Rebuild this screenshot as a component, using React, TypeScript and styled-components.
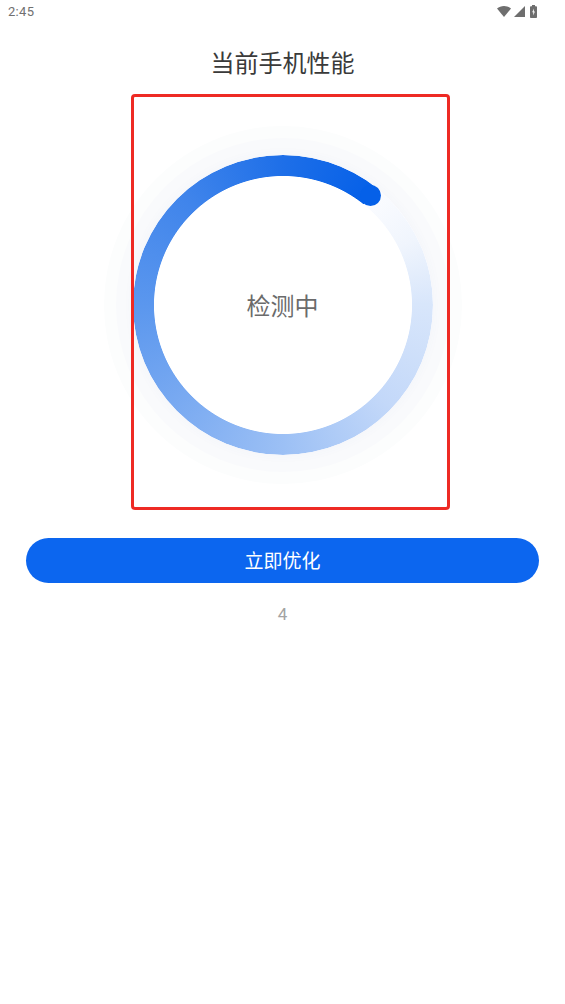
import React from 'react';
import styled, { createGlobalStyle } from 'styled-components';

const CJK = '"Noto Sans CJK SC", "Noto Sans", sans-serif';

const GlobalStyle = createGlobalStyle`
  html, body {
    margin: 0;
    padding: 0;
    background: #fff;
  }
`;

const Screen = styled.div`
  position: relative;
  width: 565px;
  height: 1004px;
  overflow: hidden;
  background: #fff;
  font-family: ${CJK};
`;

const StatusBar = styled.div`
  display: flex;
  align-items: center;
  justify-content: space-between;
  height: 22px;
  padding: 0 28px 2px 8px;
`;

const Clock = styled.span`
  font-family: Roboto, sans-serif;
  font-size: 13px;
  letter-spacing: 0.3px;
  color: #707070;
`;

const StatusIcons = styled.div`
  display: flex;
  align-items: center;
  color: #6e6e6e;
`;

const StatusIcon = styled.svg<{ $gap?: number }>`
  display: block;
  margin-left: ${p => p.$gap ?? 0}px;
`;

const Title = styled.h1`
  margin: 20px 0 0;
  height: 36px;
  line-height: 36px;
  font-size: 24px;
  font-weight: 400;
  text-align: center;
  color: #3a3a3a;
`;

const Stage = styled.div`
  display: flex;
  align-items: center;
  justify-content: center;
  height: 416px;
  margin-top: 17px;
`;

const Halo = styled.div<{ $size: number; $tint: string }>`
  display: flex;
  align-items: center;
  justify-content: center;
  flex: none;
  width: ${p => p.$size}px;
  height: ${p => p.$size}px;
  border-radius: 50%;
  background: ${p => p.$tint};
`;

const Dial = styled.div`
  position: relative;
  display: flex;
  align-items: center;
  justify-content: center;
  width: 300px;
  height: 300px;
  flex: none;
  border-radius: 50%;
  background: #fff;
  box-shadow: 0 0 12px rgba(70, 110, 190, 0.04);
`;

const Ring = styled.div`
  position: absolute;
  inset: 0;
  border-radius: 50%;
  background: conic-gradient(
    from 38.6deg,
    #fbfcff 0deg,
    #f0f5fd 25deg,
    #d8e6fb 51deg,
    #c3d8f9 95deg,
    #9cc0f5 141deg,
    #78a9f1 190deg,
    #5b97ee 231deg,
    #3f84eb 280deg,
    #1e6fe8 321deg,
    #0560e8 360deg
  );
  -webkit-mask: radial-gradient(circle, transparent 128.6px, #000 129.4px);
  mask: radial-gradient(circle, transparent 128.6px, #000 129.4px);
`;

const RingHead = styled.span`
  position: absolute;
  top: 30px;
  left: 227px;
  width: 21px;
  height: 21px;
  border-radius: 50%;
  background: #0560e8;
`;

const DialLabel = styled.span`
  position: relative;
  font-size: 24px;
  line-height: 36px;
  color: #6b6b6b;
`;

const Frame = styled.div`
  position: absolute;
  top: 94px;
  left: 131px;
  width: 319px;
  height: 416px;
  box-sizing: border-box;
  border: 3px solid #ee2a24;
  border-radius: 4px;
  pointer-events: none;
`;

const Actions = styled.div`
  display: flex;
  flex-direction: column;
  align-items: center;
  margin-top: 25px;
  padding: 0 26px;
`;

const PrimaryButton = styled.button`
  width: 100%;
  height: 45px;
  padding: 0 0 2px;
  border: none;
  border-radius: 23px;
  background: #0c66ef;
  color: #fff;
  font-family: ${CJK};
  font-size: 19px;
`;

const Countdown = styled.span`
  margin-top: 21px;
  font-family: Roboto, sans-serif;
  font-size: 17px;
  line-height: 20px;
  color: #a3a3a3;
`;

const WifiIcon = () => (
  <StatusIcon width="14" height="11" viewBox="0 0 14 11" fill="currentColor">
    <path d="M0 2.600C1.900 1 4.300 0 7 0s5.100 1 7 2.600L7 11z" />
  </StatusIcon>
);

const SignalIcon = () => (
  <StatusIcon $gap={3} width="11" height="11" viewBox="0 0 11 11" fill="currentColor">
    <path d="M11 0v11H0z" />
  </StatusIcon>
);

const BatteryIcon = () => (
  <StatusIcon $gap={5} width="7" height="13" viewBox="0 0 7 13">
    <path fill="currentColor" d="M2 0h3v1.300h1.200c.4 0 .8.300.8.800v10.100c0 .4-.4.800-.8.800H.8c-.4 0-.8-.4-.8-.8V2.100c0-.5.400-.8.800-.8H2z" />
    <path fill="#fff" d="M3.900 3.500 2.200 7.300h1.100V10.500l1.600-4H3.800z" />
  </StatusIcon>
);

export default function App() {
  return (
    <Screen>
      <GlobalStyle />
      <StatusBar>
        <Clock>2:45</Clock>
        <StatusIcons>
          <WifiIcon />
          <SignalIcon />
          <BatteryIcon />
        </StatusIcons>
      </StatusBar>
      <Title>当前手机性能</Title>
      <Stage>
        <Halo $size={358} $tint="#fcfdfd">
          <Halo $size={334} $tint="#f9fafc">
            <Dial>
              <Ring />
              <RingHead />
              <DialLabel>检测中</DialLabel>
            </Dial>
          </Halo>
        </Halo>
      </Stage>
      <Frame />
      <Actions>
        <PrimaryButton>立即优化</PrimaryButton>
        <Countdown>4</Countdown>
      </Actions>
    </Screen>
  );
}
